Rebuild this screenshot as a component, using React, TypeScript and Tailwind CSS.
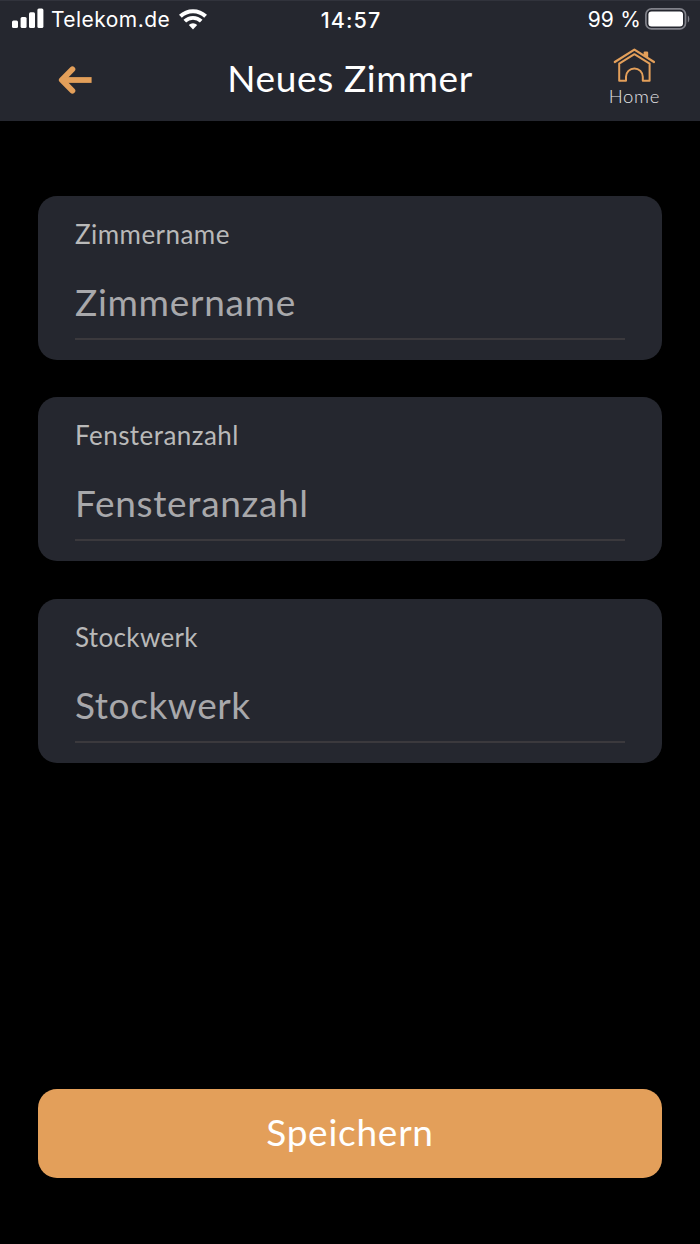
import { useState } from "react";

type Field = {
  id: string;
  label: string;
  labelClass: string;
  inputClass: string;
};

// Tracking differs a little per word so the lines keep their widths
const fields: Field[] = [
  {
    id: "name",
    label: "Zimmername",
    labelClass: "tracking-[0.45px]",
    inputClass: "tracking-[0.7px]",
  },
  {
    id: "windows",
    label: "Fensteranzahl",
    labelClass: "tracking-[0.45px]",
    inputClass: "tracking-[0.68px]",
  },
  {
    id: "floor",
    label: "Stockwerk",
    labelClass: "tracking-[0.35px]",
    inputClass: "tracking-[0.58px]",
  },
];

function SignalIcon() {
  return (
    <svg
      className="mb-0.5"
      width="32"
      height="20"
      viewBox="0 0 32 20"
      fill="#fff"
    >
      <rect x="0" y="12.5" width="6" height="7.5" rx="1.5" />
      <rect x="8.6" y="9" width="6" height="11" rx="1.5" />
      <rect x="17" y="4.2" width="6" height="15.8" rx="1.5" />
      <rect x="25.4" y="0.5" width="6" height="19.5" rx="1.5" />
    </svg>
  );
}

function WifiIcon() {
  return (
    <svg width="28" height="21" viewBox="0 0 28 21" fill="none" stroke="#fff">
      <path d="M1.4 7.2a18.2 18.2 0 0 1 25.2 0" strokeWidth="4" />
      <path d="M5.8 12.2a11.8 11.8 0 0 1 16.4 0" strokeWidth="3.8" />
      <path
        d="M14 20.4l-4.2-4.4a6 6 0 0 1 8.4 0z"
        fill="#fff"
        stroke="none"
      />
    </svg>
  );
}

function BatteryIcon() {
  return (
    <svg width="45" height="22" viewBox="0 0 45 22" fill="none">
      <rect
        x="0.9"
        y="0.9"
        width="39.6"
        height="20"
        rx="5.6"
        stroke="#81828a"
        strokeWidth="1.7"
      />
      <rect x="3.4" y="3.4" width="34.6" height="15" rx="3.2" fill="#fff" />
      <path d="M42.8 7.4c2 1 2 6 0 7z" fill="#81828a" />
    </svg>
  );
}

function BackIcon() {
  return (
    <svg
      width="34"
      height="28"
      viewBox="0 0 34 28"
      fill="none"
      stroke="#e39f5a"
      strokeWidth="5.8"
    >
      <path
        d="M14.4 3.3L3.8 14l10.6 10.7"
        strokeLinecap="round"
        strokeLinejoin="round"
      />
      <path d="M4 14h29.6" />
    </svg>
  );
}

function HomeIcon() {
  return (
    <svg
      width="42"
      height="34"
      viewBox="0 0 42 34"
      fill="none"
      stroke="#e39f5a"
      strokeWidth="2"
      strokeLinejoin="round"
      strokeLinecap="round"
    >
      <path d="M1.8 14L21.4 1.6 41 14" strokeWidth="2.2" />
      <path d="M31.8 7V4.6h2.2v4" strokeWidth="2.4" />
      <path d="M6.2 15.6v17.2H13v-4a8.4 8.4 0 0 1 16.8 0v4h6.8V15.6L21.4 6.2z" />
    </svg>
  );
}

export default function App() {
  const [values, setValues] = useState<Record<string, string>>({});

  const handleChange = (id: string, value: string) => {
    setValues((prev) => ({ ...prev, [id]: value }));
  };

  return (
    <div className="flex h-[1244px] w-[700px] flex-col bg-black font-[Lato,sans-serif]">
      <header className="h-[121px] border-t border-[#31333c] bg-[#25272f] text-white">
        {/* Status bar */}
        <div className="grid h-9 grid-cols-3 items-center pl-3 pr-[10px] font-[Inter,sans-serif] text-[21px] leading-8">
          <div className="flex items-center">
            <SignalIcon />
            <span className="mt-0.5 ml-[7px] mr-[9px] tracking-[0.45px]">
              Telekom.de
            </span>
            <WifiIcon />
          </div>
          <div className="mt-px text-center text-[21.5px] font-medium tracking-[1.1px]">
            14:57
          </div>
          <div className="flex items-center justify-end gap-1">
            <span className="mt-0.5 tracking-[0.2px]">99 %</span>
            <BatteryIcon />
          </div>
        </div>

        {/* Title bar */}
        <div className="grid h-[84px] grid-cols-[1fr_auto_1fr] items-start">
          <button aria-label="Zurück" className="ml-[58px] mt-[29px] w-[34px]">
            <BackIcon />
          </button>
          <h1 className="mt-[17px] text-[37px] leading-[48px] tracking-[0.65px]">
            Neues Zimmer
          </h1>
          <button className="mr-10 mt-[11px] flex flex-col items-center justify-self-end">
            <HomeIcon />
            <span className="mt-0.5 text-[18.5px] leading-6 font-light tracking-[0.7px] text-[#e4e4e6]">
              Home
            </span>
          </button>
        </div>
      </header>

      <main className="flex flex-1 flex-col px-[38px] pt-[74.9px] pb-[66px]">
        <div className="flex flex-col gap-[37.4px]">
          {fields.map((field) => (
            <div
              key={field.id}
              className="flex h-[164px] flex-col rounded-[19px] bg-[#25272f] px-[37px] pt-[20.2px]"
            >
              <label
                htmlFor={field.id}
                className={`text-[26px] leading-9 text-[#b9b9b9] ${field.labelClass}`}
              >
                {field.label}
              </label>
              <input
                id={field.id}
                value={values[field.id] ?? ""}
                onChange={(e) => handleChange(field.id, e.target.value)}
                placeholder={field.label}
                className={`mt-[27.4px] h-[60.4px] w-full border-b-2 border-[#3b393d] bg-transparent pb-[14.4px] text-[37px] leading-[44px] text-white outline-none placeholder:text-[#a8a8ab] ${field.inputClass}`}
              />
            </div>
          ))}
        </div>

        <button className="mt-auto h-[89px] rounded-[19px] bg-[#e39f5a] pb-1 text-[37px] tracking-[0.75px] text-white">
          Speichern
        </button>
      </main>
    </div>
  );
}
